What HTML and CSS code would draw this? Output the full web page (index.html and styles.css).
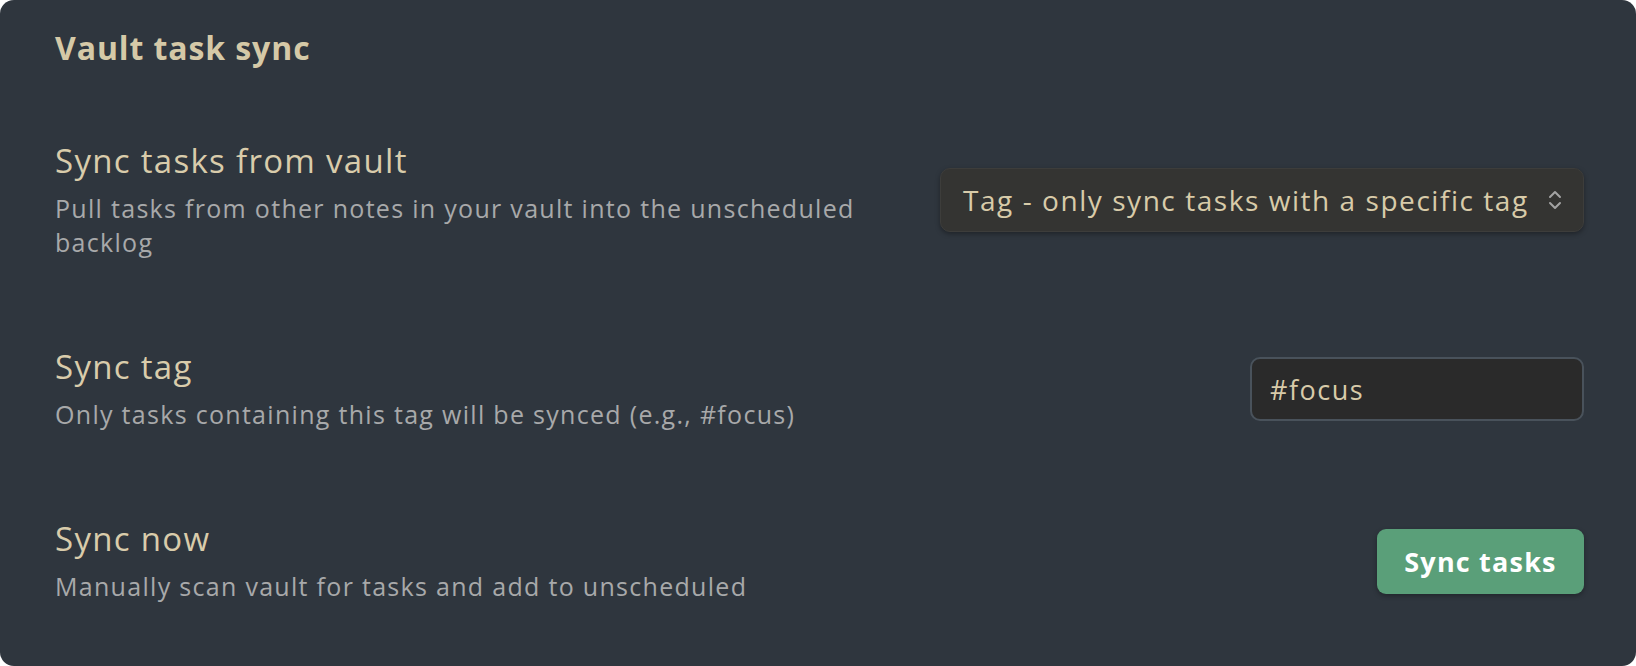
FILE: index.html
```html
<!DOCTYPE html>
<html lang="en">
<head>
<meta charset="utf-8">
<title>Vault task sync</title>
<link rel="stylesheet" href="styles.css">
</head>
<body>
<div class="card">
  <h2 class="heading">Vault task sync</h2>
  <div class="rows">
    <div class="row">
      <div class="info">
        <div class="title">Sync tasks from vault</div>
        <div class="desc">Pull tasks from other notes in your vault into the unscheduled backlog</div>
      </div>
      <div class="select">
        <span class="select-text">Tag - only sync tasks with a specific tag</span>
        <svg class="chevron" width="16" height="22" viewBox="0 0 16 22" fill="none" stroke="#a3a3a3" stroke-width="2" stroke-linecap="round" stroke-linejoin="round"><path d="M3 8 L8 3 L13 8"/><path d="M3 14 L8 19 L13 14"/></svg>
      </div>
    </div>
    <div class="row">
      <div class="info">
        <div class="title">Sync tag</div>
        <div class="desc">Only tasks containing this tag will be synced (e.g., #focus)</div>
      </div>
      <div class="input">#focus</div>
    </div>
    <div class="row">
      <div class="info">
        <div class="title">Sync now</div>
        <div class="desc">Manually scan vault for tasks and add to unscheduled</div>
      </div>
      <button class="btn">Sync tasks</button>
    </div>
  </div>
</div>
</body>
</html>
```
FILE: styles.css
```css
html, body {
  margin: 0;
  padding: 0;
  background: #ffffff;
}
body {
  font-family: "Open Sans", "Noto Sans", sans-serif;
}
.card {
  box-sizing: border-box;
  height: 666px;
  background: #2f363e;
  border-radius: 14px;
  padding: 26px 52px 0 55px;
  overflow: hidden;
}
.heading {
  margin: 0;
  font-size: 32px;
  line-height: 44px;
  font-weight: 700;
  letter-spacing: 0.9px;
  color: #d5c9a7;
}
.rows {
  display: flex;
  flex-direction: column;
  gap: 88px;
  margin-top: 71px;
}
.row {
  display: flex;
  align-items: center;
  justify-content: space-between;
}
.info {
  display: flex;
  flex-direction: column;
  gap: 10px;
  max-width: 840px;
}
.title {
  font-size: 33px;
  line-height: 40px;
  letter-spacing: 1.3px;
  color: #d9ccab;
}
.desc {
  font-size: 25px;
  line-height: 34px;
  letter-spacing: 1.3px;
  color: #a8a9aa;
}
.select {
  box-sizing: border-box;
  width: 644px;
  height: 64px;
  display: flex;
  align-items: center;
  justify-content: space-between;
  padding: 0 20px 0 22px;
  background: #343432;
  border: 1px solid #3d3d3b;
  border-radius: 10px;
  box-shadow: 0 2px 5px rgba(0, 0, 0, 0.35);
}
.select-text {
  font-size: 28px;
  letter-spacing: 1.55px;
  color: #d8cba9;
}
.chevron {
  flex: none;
}
.input {
  box-sizing: border-box;
  width: 334px;
  height: 64px;
  display: flex;
  align-items: center;
  padding: 0 18px;
  background: #2a2a2a;
  border: 2px solid #49525b;
  border-radius: 10px;
  font-size: 27px;
  letter-spacing: 1.5px;
  color: #d8cba9;
}
.btn {
  box-sizing: border-box;
  width: 207px;
  height: 65px;
  border: none;
  border-radius: 9px;
  background: #5a9f79;
  color: #ffffff;
  font-family: "Open Sans", "Noto Sans", sans-serif;
  font-size: 27px;
  font-weight: 700;
  letter-spacing: 1.2px;
  box-shadow: 0 2px 5px rgba(0, 0, 0, 0.3);
  padding: 0;
}
```
